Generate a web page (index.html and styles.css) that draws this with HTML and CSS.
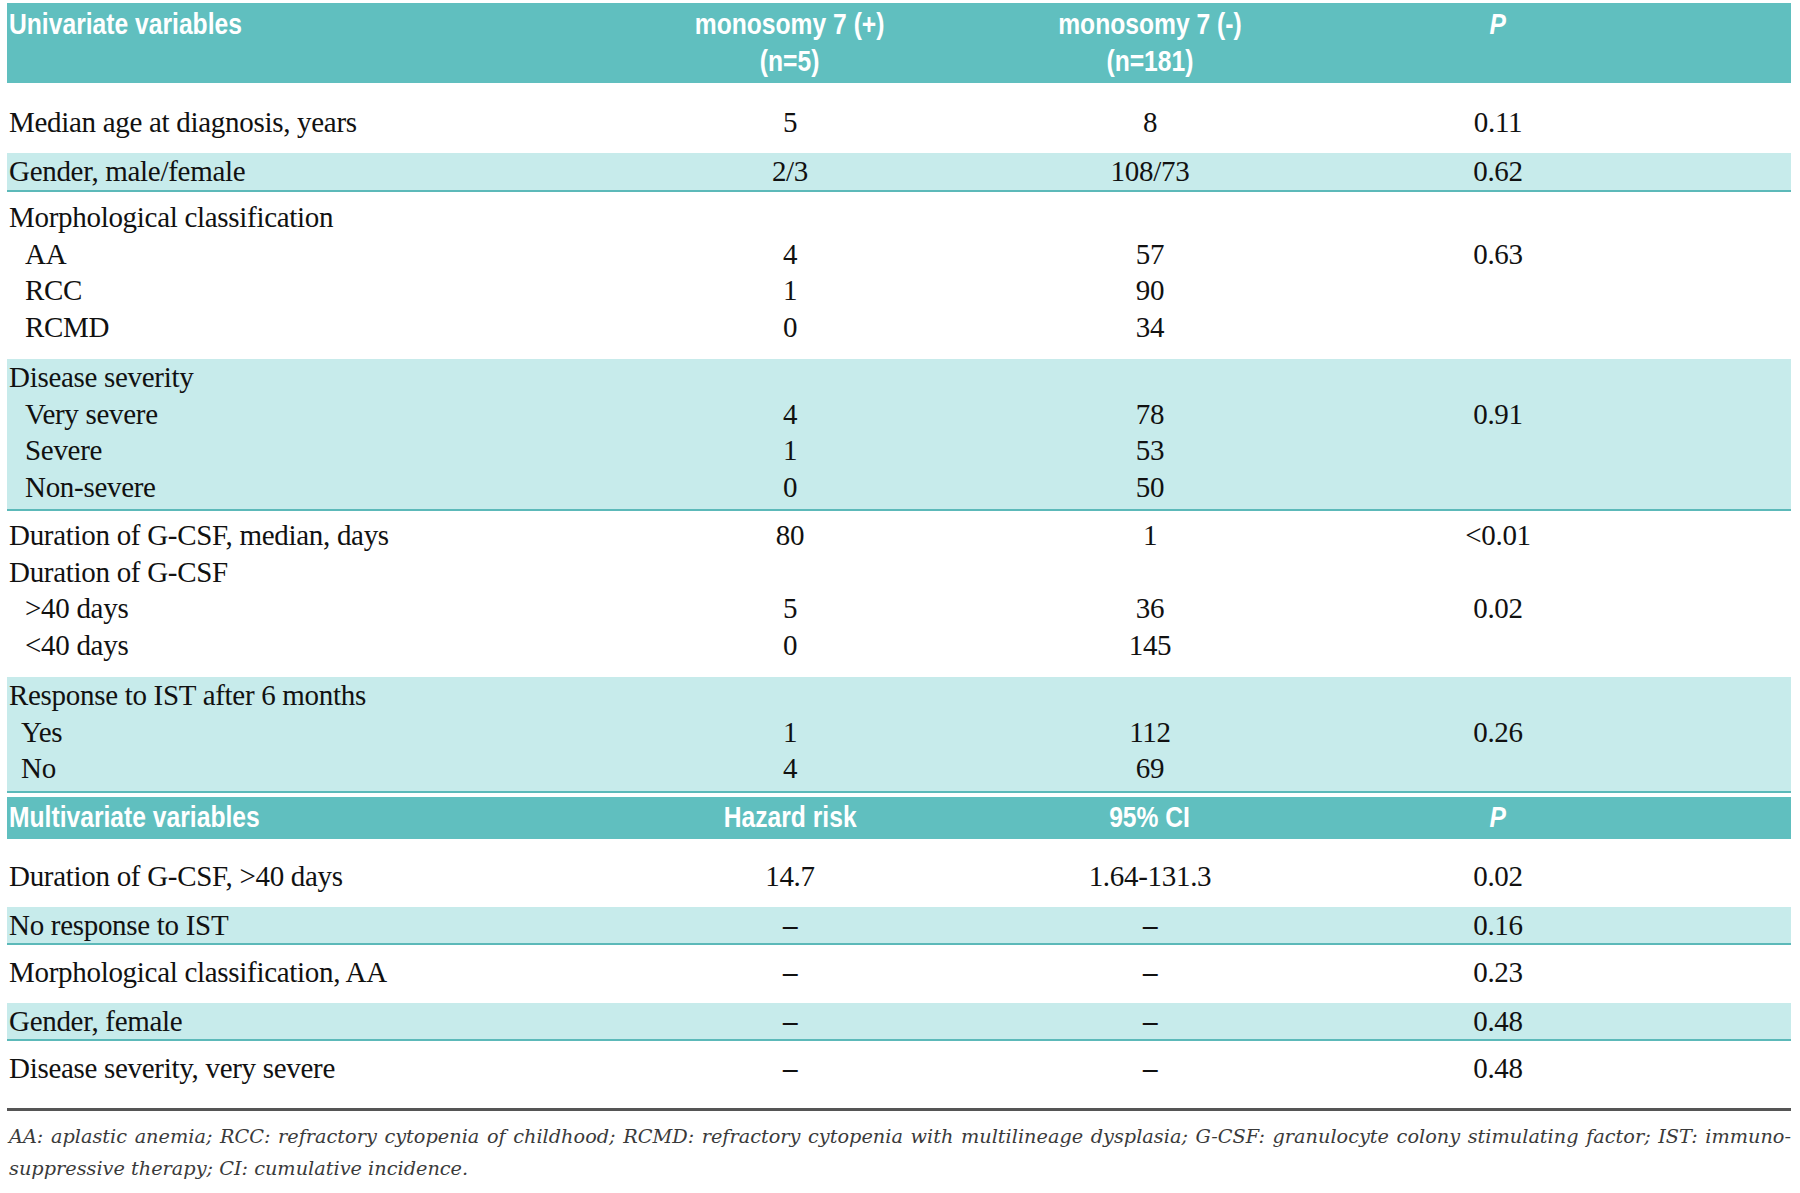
FILE: index.html
```html
<!DOCTYPE html>
<html>
<head>
<meta charset="utf-8">
<link rel="stylesheet" href="styles.css">
</head>
<body>
<div class="page">
  <div class="tbl">
    <div class="hdr hdr-uni">
      <div class="row">
        <div class="lab"><span class="t">Univariate variables</span></div>
        <div class="num"><span class="t">monosomy 7 (+)<br>(n=5)</span></div>
        <div class="num"><span class="t">monosomy 7 (-)<br>(n=181)</span></div>
        <div class="num"><span class="t"><i>P</i></span></div>
        <div></div>
      </div>
    </div>

    <div class="grp first">
      <div class="row"><div class="lab">Median age at diagnosis, years</div><div class="num">5</div><div class="num">8</div><div class="num">0.11</div><div></div></div>
    </div>

    <div class="grp band">
      <div class="row"><div class="lab">Gender, male/female</div><div class="num">2/3</div><div class="num">108/73</div><div class="num">0.62</div><div></div></div>
    </div>

    <div class="grp white g-morph">
      <div class="row"><div class="lab">Morphological classification</div><div class="num"></div><div class="num"></div><div class="num"></div><div></div></div>
      <div class="row"><div class="lab sub">AA</div><div class="num">4</div><div class="num">57</div><div class="num">0.63</div><div></div></div>
      <div class="row"><div class="lab sub">RCC</div><div class="num">1</div><div class="num">90</div><div class="num"></div><div></div></div>
      <div class="row"><div class="lab sub">RCMD</div><div class="num">0</div><div class="num">34</div><div class="num"></div><div></div></div>
    </div>

    <div class="grp band band-multi">
      <div class="row"><div class="lab">Disease severity</div><div class="num"></div><div class="num"></div><div class="num"></div><div></div></div>
      <div class="row"><div class="lab sub">Very severe</div><div class="num">4</div><div class="num">78</div><div class="num">0.91</div><div></div></div>
      <div class="row"><div class="lab sub">Severe</div><div class="num">1</div><div class="num">53</div><div class="num"></div><div></div></div>
      <div class="row"><div class="lab sub">Non-severe</div><div class="num">0</div><div class="num">50</div><div class="num"></div><div></div></div>
    </div>

    <div class="grp white g-dur">
      <div class="row"><div class="lab">Duration of G-CSF, median, days</div><div class="num">80</div><div class="num">1</div><div class="num">&lt;0.01</div><div></div></div>
      <div class="row"><div class="lab">Duration of G-CSF</div><div class="num"></div><div class="num"></div><div class="num"></div><div></div></div>
      <div class="row"><div class="lab sub">&gt;40 days</div><div class="num">5</div><div class="num">36</div><div class="num">0.02</div><div></div></div>
      <div class="row"><div class="lab sub">&lt;40 days</div><div class="num">0</div><div class="num">145</div><div class="num"></div><div></div></div>
    </div>

    <div class="grp band band-multi">
      <div class="row"><div class="lab">Response to IST after 6 months</div><div class="num"></div><div class="num"></div><div class="num"></div><div></div></div>
      <div class="row"><div class="lab sub sub-s">Yes</div><div class="num">1</div><div class="num">112</div><div class="num">0.26</div><div></div></div>
      <div class="row"><div class="lab sub sub-s">No</div><div class="num">4</div><div class="num">69</div><div class="num"></div><div></div></div>
    </div>

    <div class="hdr hdr-multi">
      <div class="row">
        <div class="lab"><span class="t">Multivariate variables</span></div>
        <div class="num"><span class="t">Hazard risk</span></div>
        <div class="num"><span class="t">95% CI</span></div>
        <div class="num"><span class="t"><i>P</i></span></div>
        <div></div>
      </div>
    </div>

    <div class="grp first-multi">
      <div class="row"><div class="lab">Duration of G-CSF, &gt;40 days</div><div class="num">14.7</div><div class="num">1.64-131.3</div><div class="num">0.02</div><div></div></div>
    </div>

    <div class="grp band">
      <div class="row"><div class="lab">No response to IST</div><div class="num dash">–</div><div class="num dash">–</div><div class="num">0.16</div><div></div></div>
    </div>

    <div class="grp white g-single">
      <div class="row"><div class="lab">Morphological classification, AA</div><div class="num dash">–</div><div class="num dash">–</div><div class="num">0.23</div><div></div></div>
    </div>

    <div class="grp band">
      <div class="row"><div class="lab">Gender, female</div><div class="num dash">–</div><div class="num dash">–</div><div class="num">0.48</div><div></div></div>
    </div>

    <div class="grp white g-last">
      <div class="row"><div class="lab">Disease severity, very severe</div><div class="num dash">–</div><div class="num dash">–</div><div class="num">0.48</div><div></div></div>
    </div>
  </div>

  <div class="rule"></div>

  <div class="foot">
    <div class="foot-line1">AA: aplastic anemia; RCC: refractory cytopenia of childhood; RCMD: refractory cytopenia with multilineage dysplasia; G-CSF: granulocyte colony stimulating factor; IST: immuno-</div>
    <div class="foot-line2">suppressive therapy; CI: cumulative incidence.</div>
  </div>
</div>
</body>
</html>
```

FILE: styles.css
```css
html, body {
  margin: 0;
  padding: 0;
  background: #ffffff;
}

.page {
  width: 1784px;
  padding: 3px 0 0 7px;
}

.tbl {
  display: flex;
  flex-direction: column;
}

.row {
  display: grid;
  grid-template-columns: 603px 360px 360px 336px 1fr;
  align-items: center;
}

.lab {
  padding-left: 2px;
  white-space: nowrap;
}

.sub {
  padding-left: 18px;
}

.sub-s {
  padding-left: 14px;
}

.num {
  text-align: center;
  white-space: nowrap;
}

/* header bands */
.hdr {
  background: #60bfbf;
  color: #ffffff;
  font-family: "Liberation Sans", Arial, sans-serif;
  font-weight: 700;
  font-size: 29px;
  line-height: 37px;
}

.hdr .t {
  display: inline-block;
  transform: scaleX(0.85);
  transform-origin: center top;
  text-align: center;
}

.hdr .lab .t {
  transform-origin: left top;
  text-align: left;
}

.hdr i {
  font-style: italic;
}

.hdr-uni {
  height: 80px;
  box-sizing: border-box;
  padding-top: 3px;
}

.hdr-uni .row {
  align-items: start;
}

.hdr-multi {
  margin-top: 4px;
  height: 42px;
  box-sizing: border-box;
  padding-top: 2px;
}

/* body groups */
.grp {
  font-family: "Liberation Serif", "Times New Roman", serif;
  font-size: 29px;
  letter-spacing: -0.3px;
  line-height: 36.5px;
  color: #111111;
}

.grp .row {
  height: 36.5px;
}

.first {
  padding: 21px 0 12.5px;
}

.first-multi {
  padding: 19px 0 12.5px;
}

.band {
  background: #c7ebeb;
  border-bottom: 2px solid #5cb9b9;
  padding: 0;
}

.band-multi {
  padding-bottom: 4px;
}

.g-morph {
  padding: 7.5px 0 14px;
}

.g-dur {
  padding: 6px 0 14px;
}

.g-single {
  padding: 8.5px 0 12.5px;
}

.g-last {
  padding: 8.5px 0 22px;
}

.dash {
  font-weight: 700;
}

/* footer */
.rule {
  height: 3px;
  background: #555555;
}

.foot {
  margin-top: 10px;
  font-family: "DejaVu Serif", "Liberation Serif", serif;
  font-style: italic;
  font-size: 19.3px;
  line-height: 32px;
  color: #3a3a3a;
  padding-left: 2px;
}

.foot-line1 {
  text-align: justify;
  text-align-last: justify;
}

.foot-line2 {
  text-align: left;
}
```
